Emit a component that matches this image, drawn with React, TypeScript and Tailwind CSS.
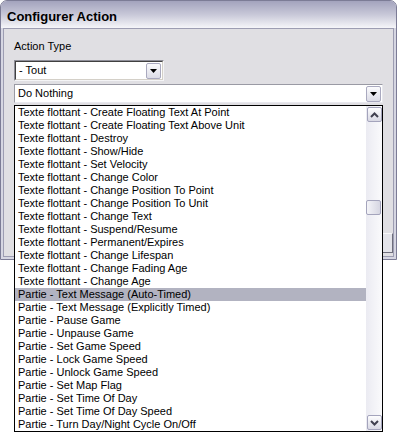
import React from 'react'

const items = [
  'Texte flottant - Create Floating Text At Point',
  'Texte flottant - Create Floating Text Above Unit',
  'Texte flottant - Destroy',
  'Texte flottant - Show/Hide',
  'Texte flottant - Set Velocity',
  'Texte flottant - Change Color',
  'Texte flottant - Change Position To Point',
  'Texte flottant - Change Position To Unit',
  'Texte flottant - Change Text',
  'Texte flottant - Suspend/Resume',
  'Texte flottant - Permanent/Expires',
  'Texte flottant - Change Lifespan',
  'Texte flottant - Change Fading Age',
  'Texte flottant - Change Age',
  'Partie - Text Message (Auto-Timed)',
  'Partie - Text Message (Explicitly Timed)',
  'Partie - Pause Game',
  'Partie - Unpause Game',
  'Partie - Set Game Speed',
  'Partie - Lock Game Speed',
  'Partie - Unlock Game Speed',
  'Partie - Set Map Flag',
  'Partie - Set Time Of Day',
  'Partie - Set Time Of Day Speed',
  'Partie - Turn Day/Night Cycle On/Off',
]

const selected = 14

function DropButton() {
  return (
    <div className="w-[15px] h-[16px] flex items-center justify-center border border-[#a9a9bf] rounded-[2px] bg-gradient-to-b from-[#fbfbfd] to-[#dcdce6]">
      <svg width="7" height="4" viewBox="0 0 7 4">
        <path d="M0 0 L7 0 L3.5 4 Z" fill="#000" />
      </svg>
    </div>
  )
}

function ScrollButton({ up }: { up?: boolean }) {
  return (
    <div className="w-[15px] h-[15px] flex items-center justify-center border border-[#a4a4bc] rounded-[2px] bg-gradient-to-b from-[#fdfdfe] to-[#d9d9e4]">
      <svg width="9" height="6" viewBox="0 0 9 6">
        <path
          d={up ? 'M1 5 L4.5 1.5 L8 5' : 'M1 1 L4.5 4.5 L8 1'}
          fill="none"
          stroke="#40404f"
          strokeWidth="2"
        />
      </svg>
    </div>
  )
}

export default function App() {
  return (
    <div className="relative w-[397px] h-[432px] bg-white overflow-hidden font-['Liberation_Sans',Arial,sans-serif] text-[11px] text-black">
      {/* Window */}
      <div className="w-[397px] h-[260px] flex flex-col border border-[#7c7c96] rounded-t-[7px] bg-[#d6d6e2]">
        {/* Title bar */}
        <div className="h-[27px] shrink-0 flex items-center pl-[6px] rounded-t-[6px] bg-gradient-to-b from-[#a3a3bd] via-[#c8c8d8] to-[#f6f6f9]">
          <span className="font-bold text-[13px] leading-none pt-[4px]">Configurer Action</span>
        </div>

        {/* Client area */}
        <div className="relative flex-1 mx-[2px] mb-[2px] border border-[#9d9db2] bg-[#e0dfe3] flex flex-col pl-[10px] pt-[11px]">
          <div className="h-[13px] leading-[13px]">Action Type</div>

          <div className="mt-[7px] w-[150px] h-[21px] flex items-center justify-between border border-t-[#8e8e98] border-l-[#8e8e98] border-r-[#f4f4f6] border-b-[#f4f4f6] bg-white">
            <div className="flex-1 h-full flex items-center justify-between border border-t-[#404040] border-l-[#404040] border-r-[#d4d0c8] border-b-[#d4d0c8] pr-[1px]">
              <span className="pl-[3px]">- Tout</span>
              <DropButton />
            </div>
          </div>

          <div className="mt-[3px] w-[369px] h-[19px] flex items-center justify-between border border-[#9a9aa4] border-r-[#e8e8ee] border-b-[#e8e8ee] bg-white pr-[1px]">
            <span className="pl-[3px]">Do Nothing</span>
            <DropButton />
          </div>

          {/* Button hidden behind the list */}
          <div className="absolute right-0 top-[204px] w-[80px] h-[20px] border border-[#f8f8fa] border-r-[#6e6e7c] border-b-[#6e6e7c] bg-[#e4e4ea]" />
        </div>
      </div>

      {/* Open dropdown list */}
      <div className="absolute left-[14px] top-[105px] w-[369px] h-[327px] border border-black bg-white flex">
        <div className="flex-1 flex flex-col">
          {items.map((t, i) => (
            <div
              key={t}
              className={`h-[13px] leading-[13px] pl-[3px] whitespace-nowrap overflow-hidden ${
                i === selected ? 'bg-[#b2b3c1]' : ''
              }`}
            >
              {t}
            </div>
          ))}
        </div>
        <div className="w-[16px] flex flex-col items-center justify-between py-[1px] bg-gradient-to-r from-[#ebebf2] to-[#fafafc]">
          <ScrollButton up />
          <div className="flex-1 relative w-full">
            <div className="absolute left-[0px] top-[78px] w-[15px] h-[15px] border border-[#a4a4bc] rounded-[2px] bg-gradient-to-r from-[#f4f4f8] to-[#d6d6e2]" />
          </div>
          <ScrollButton />
        </div>
      </div>
    </div>
  )
}
